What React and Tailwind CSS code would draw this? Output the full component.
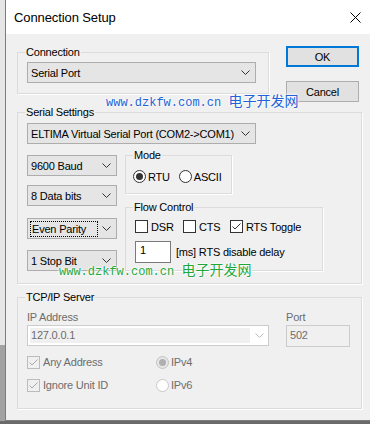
import React from "react";

function Chevron({ color = "#333" }) {
  return (
    <svg width="9" height="5" viewBox="0 0 9 5" className="shrink-0">
      <path d="M0.5 0.5 L4.5 4.5 L8.5 0.5" fill="none" stroke={color} strokeWidth="1" />
    </svg>
  );
}

function Combo({ className = "", children, focus }) {
  return (
    <div
      className={`flex h-[21px] items-center justify-between border border-[#adadad] bg-[#e5e5e5] pr-[5px] ${
        focus ? "pl-[2px]" : "pl-[3px]"
      } ${className}`}
    >
      {focus ? (
        <span className="flex h-[16px] w-[68px] items-center border border-dotted border-black px-[1px]">
          {children}
        </span>
      ) : (
        <span className="whitespace-nowrap">{children}</span>
      )}
      <Chevron />
    </div>
  );
}

function Check({ checked, disabled }) {
  return (
    <span
      className={`flex h-[13px] w-[13px] shrink-0 items-center justify-center border ${
        disabled ? "border-[#bcbcbc] bg-[#f0f0f0]" : "border-[#333333] bg-white"
      }`}
    >
      {checked && (
        <svg width="11" height="11" viewBox="0 0 11 11">
          <path
            d="M1.5 5.5 L4 8 L9.5 2.5"
            fill="none"
            stroke={disabled ? "#a8a8a8" : "#333"}
            strokeWidth="1"
          />
        </svg>
      )}
    </span>
  );
}

function Radio({ checked, disabled }) {
  return (
    <span
      className={`flex h-[13px] w-[13px] shrink-0 items-center justify-center rounded-full border ${
        disabled
          ? checked
            ? "border-[#c4c4c4] bg-[#e6e6e6]"
            : "border-[#c8c8c8] bg-white"
          : "border-[#333333] bg-white"
      }`}
    >
      {checked && (
        <span
          className={`h-[7px] w-[7px] rounded-full ${disabled ? "bg-[#b0b0b0]" : "bg-[#333333]"}`}
        />
      )}
    </span>
  );
}

function Group({ label, className = "", children }) {
  return (
    <fieldset className={`border border-[#dcdcdc] shadow-[1px_1px_0_#ffffff] ${className}`}>
      <legend className="ml-[7px] px-[1px] leading-[16px]">{label}</legend>
      {children}
    </fieldset>
  );
}

export default function App() {
  return (
    <div className="relative flex h-[424px] w-[370px] overflow-hidden bg-[#6a6a6a] font-['Liberation_Sans',Arial,sans-serif] text-[11px] leading-[16px] tracking-[-0.2px] text-black">
      {/* background strip on the left */}
      <div className="flex w-[5px] shrink-0 flex-col">
        <div className="h-[345px] bg-[#e6e6e6]" />
        <div className="h-[76px] bg-[#a2a2a2]" />
      </div>

      {/* dialog window */}
      <div className="flex h-[421px] w-[365px] shrink-0 flex-col border-b border-l border-[#7c7c7c] bg-[#f0f0f0]">
        {/* title bar */}
        <div className="flex h-[34px] shrink-0 items-start justify-between bg-white pl-[8px] pr-[9px]">
          <span className="pt-[10px] text-[13px] leading-[16px] tracking-[-0.1px]">Connection Setup</span>
          <svg width="11" height="11" viewBox="0 0 11 11" className="mt-[12px]">
            <path d="M0.5 0.5 L10.5 10.5 M10.5 0.5 L0.5 10.5" stroke="#000" strokeWidth="1" />
          </svg>
        </div>

        {/* body */}
        <div className="flex flex-col pl-[11px] pt-[10px]">
          {/* row 1 */}
          <div className="flex items-start">
            <Group label="Connection" className="h-[50px] w-[252px]">
              <div className="pl-[9px] pt-[2px]">
                <Combo className="w-[229px]">Serial Port</Combo>
              </div>
            </Group>
            <div className="ml-[17px] mt-[2px] flex flex-col">
              <div className="flex h-[21px] w-[73px] items-center justify-center border-2 border-[#0078d7] bg-[#e1e1e1]">
                OK
              </div>
              <div className="mt-[14px] flex h-[21px] w-[73px] items-center justify-center border border-[#adadad] bg-[#e1e1e1]">
                Cancel
              </div>
            </div>
          </div>

          {/* Serial settings */}
          <Group label="Serial Settings" className="mt-[2px] h-[180px] w-[345px]">
            <div className="flex flex-col pl-[9px]">
              <Combo className="mt-[3px] w-[229px]">ELTIMA Virtual Serial Port (COM2-&gt;COM1)</Combo>
              <div className="flex items-start">
                <div className="flex w-[90px] flex-col">
                  <Combo className="mt-[11px] w-[90px]">9600 Baud</Combo>
                  <Combo className="mt-[9px] w-[90px]">8 Data bits</Combo>
                  <Combo className="mt-[12px] w-[90px]" focus>
                    Even Parity
                  </Combo>
                  <Combo className="mt-[11px] w-[90px]">1 Stop Bit</Combo>
                </div>
                <div className="ml-[8px] flex flex-col">
                  <Group label="Mode" className="mt-[3px] h-[47px] w-[107px]">
                    <div className="mt-[7px] flex h-[13px] items-center pl-[7px]">
                      <Radio checked />
                      <span className="ml-[2px]">RTU</span>
                      <span className="ml-[9px]">
                        <Radio />
                      </span>
                      <span className="ml-[2px]">ASCII</span>
                    </div>
                  </Group>
                  <Group label="Flow Control" className="mt-[5px] h-[72px] w-[198px]">
                    <div className="flex flex-col pl-[9px]">
                      <div className="mt-[5px] flex h-[13px] items-center">
                        <div className="flex w-[48px] items-center">
                          <Check />
                          <span className="ml-[3px]">DSR</span>
                        </div>
                        <div className="flex w-[47px] items-center">
                          <Check />
                          <span className="ml-[3px]">CTS</span>
                        </div>
                        <div className="flex items-center">
                          <Check checked />
                          <span className="ml-[3px]">RTS Toggle</span>
                        </div>
                      </div>
                      <div className="mt-[8px] flex items-center">
                        <div className="h-[22px] w-[36px] border border-[#7a7a7a] bg-white pl-[4px]">1</div>
                        <span className="ml-[5px]">[ms] RTS disable delay</span>
                      </div>
                    </div>
                  </Group>
                </div>
              </div>
            </div>
          </Group>

          {/* TCP/IP server */}
          <Group label="TCP/IP Server" className="mt-[5px] h-[120px] w-[345px]">
            <div className="flex flex-col pl-[9px] text-[#6d6d6d]">
              <div className="mt-[4px] flex items-start">
                <div className="flex w-[242px] flex-col">
                  <span>IP Address</span>
                  <div className="flex h-[21px] items-center border border-[#cccccc] bg-white p-[2px] pr-[4px]">
                    <div className="h-[15px] w-[220px] bg-[#f0f0f0] pl-[1px] leading-[15px]">127.0.0.1</div>
                    <div className="flex flex-1 justify-end">
                      <Chevron color="#bdbdbd" />
                    </div>
                  </div>
                </div>
                <div className="ml-[17px] flex flex-col">
                  <span>Port</span>
                  <div className="h-[22px] w-[64px] border border-[#cccccc] bg-[#f0f0f0] pl-[3px] pt-[1px]">502</div>
                </div>
              </div>
              <div className="mt-[7px] grid h-[13px] grid-cols-[129px_auto] items-center">
                <div className="flex items-center">
                  <Check checked disabled />
                  <span className="ml-[3px]">Any Address</span>
                </div>
                <div className="flex items-center">
                  <Radio checked disabled />
                  <span className="ml-[2px]">IPv4</span>
                </div>
              </div>
              <div className="mt-[10px] grid h-[13px] grid-cols-[129px_auto] items-center">
                <div className="flex items-center">
                  <Check checked disabled />
                  <span className="ml-[3px]">Ignore Unit ID</span>
                </div>
                <div className="flex items-center">
                  <Radio disabled />
                  <span className="ml-[2px]">IPv6</span>
                </div>
              </div>
            </div>
          </Group>
        </div>
      </div>

      {/* watermarks (overlay) */}
      <div className="absolute left-[106px] top-[92px] whitespace-nowrap font-['Noto_Sans_CJK_SC',sans-serif] text-[14px] leading-[16px] tracking-normal text-[#2262d6] [text-shadow:0_0_2px_#fff,0_0_2px_#fff,0_0_3px_#fff]">
        <span className="font-['Liberation_Mono',monospace] text-[12px]">www.dzkfw.com.cn </span>
        电子开发网
      </div>
      <div className="absolute left-[59px] top-[261px] whitespace-nowrap font-['Noto_Sans_CJK_SC',sans-serif] text-[14px] leading-[16px] tracking-normal text-[#1fa83c] [text-shadow:0_0_2px_#fff,0_0_2px_#fff,0_0_3px_#fff]">
        <span className="font-['Liberation_Mono',monospace] text-[12px]">www.dzkfw.com.cn </span>
        电子开发网
      </div>
    </div>
  );
}
